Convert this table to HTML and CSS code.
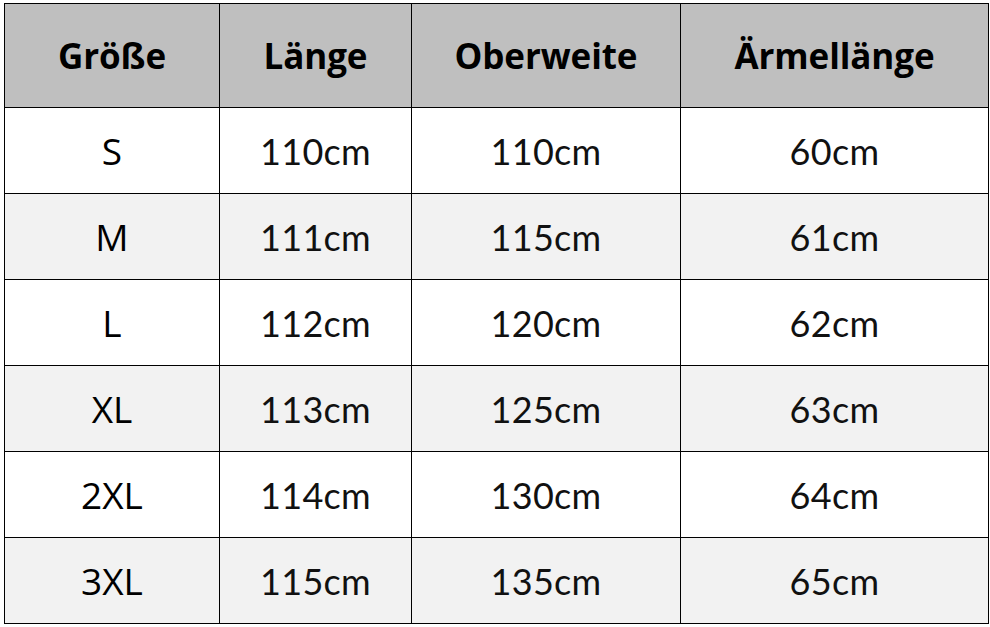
FILE: index.html
```html
<!DOCTYPE html>
<html lang="de">
<head>
<meta charset="utf-8">
<title>Größentabelle</title>
<link rel="stylesheet" href="styles.css">
</head>
<body>
<div class="sheet">
  <table class="sizes">
    <colgroup>
      <col class="c1"><col class="c2"><col class="c3"><col class="c4">
    </colgroup>
    <thead>
      <tr><th>Größe</th><th>Länge</th><th>Oberweite</th><th>Ärmellänge</th></tr>
    </thead>
    <tbody>
      <tr><td class="size">S</td><td>110cm</td><td>110cm</td><td>60cm</td></tr>
      <tr class="alt"><td class="size">M</td><td>111cm</td><td>115cm</td><td>61cm</td></tr>
      <tr><td class="size">L</td><td>112cm</td><td>120cm</td><td>62cm</td></tr>
      <tr class="alt"><td class="size">XL</td><td>113cm</td><td>125cm</td><td>63cm</td></tr>
      <tr><td class="size">2XL</td><td>114cm</td><td>130cm</td><td>64cm</td></tr>
      <tr class="alt"><td class="size">3XL</td><td>115cm</td><td>135cm</td><td>65cm</td></tr>
    </tbody>
  </table>
</div>
</body>
</html>
```

FILE: styles.css
```css
html, body {
  margin: 0;
  padding: 0;
  background: #ffffff;
}

.sheet {
  padding: 3px 0 0 4px;
}

.sizes {
  border-collapse: collapse;
  table-layout: fixed;
  width: 984px;
  color: #000;
}

.c1 { width: 215px; }
.c2 { width: 192px; }
.c3 { width: 269px; }
.c4 { width: 308px; }

.sizes th,
.sizes td {
  border: 1px solid #000;
  text-align: center;
  vertical-align: middle;
  padding: 0;
}

.sizes th {
  height: 103px;
  background: #bfbfbf;
  font-family: "Open Sans", "Noto Sans", sans-serif;
  font-weight: 700;
  font-size: 35px;
  letter-spacing: -0.1px;
}

.sizes td {
  height: 85px;
  font-family: Lato, "Noto Sans", sans-serif;
  font-weight: 400;
  font-size: 36px;
  letter-spacing: 0.3px;
  color: #111;
}

.sizes td.size {
  font-family: "Open Sans", "Noto Sans", sans-serif;
  font-weight: 400;
  font-size: 37px;
  letter-spacing: 0;
  color: #000;
}

.sizes tr.alt td {
  background: #f2f2f2;
}
```
